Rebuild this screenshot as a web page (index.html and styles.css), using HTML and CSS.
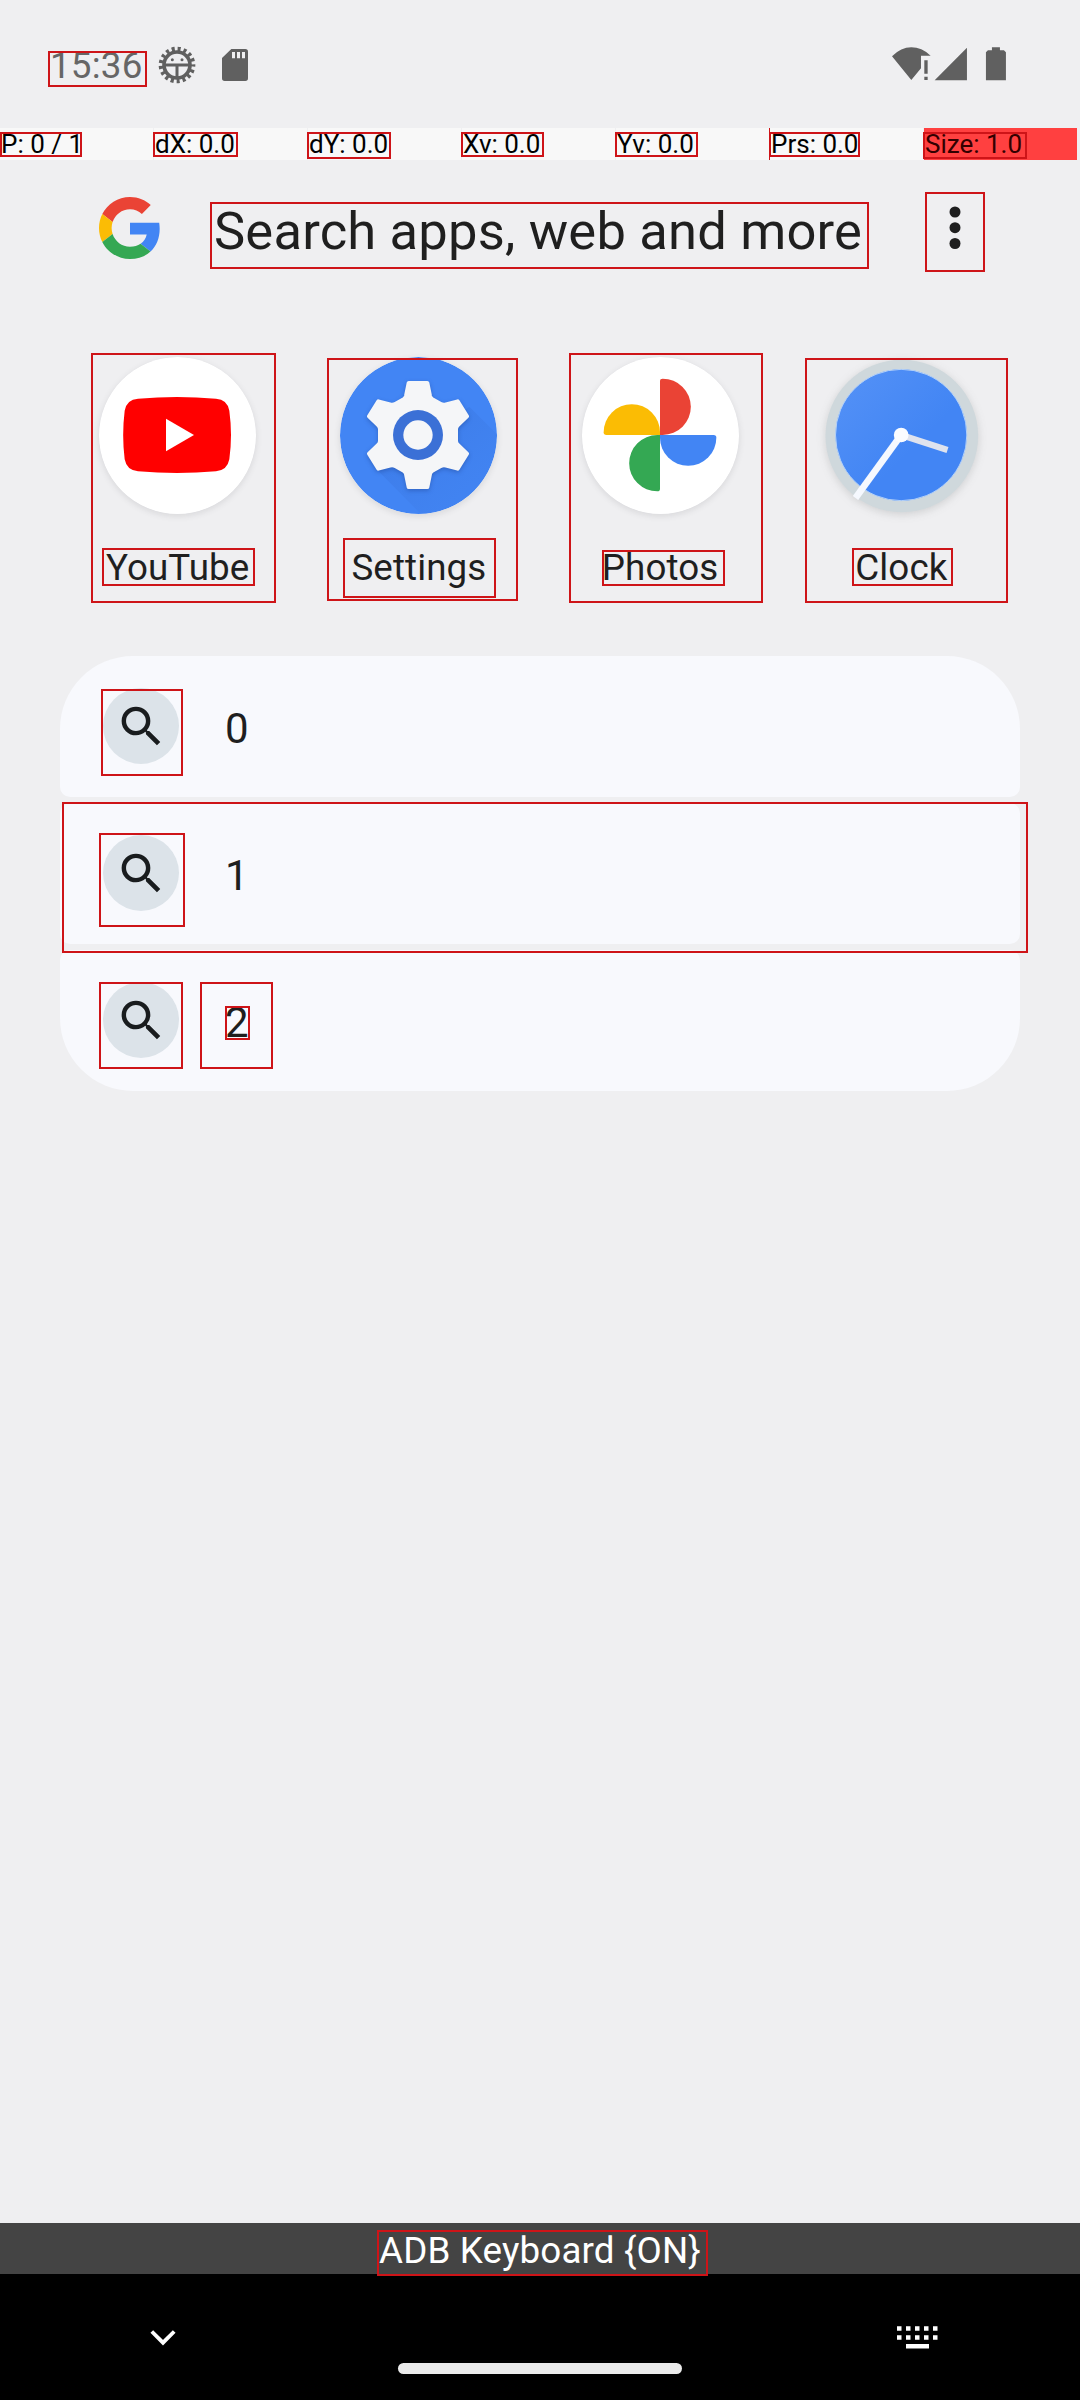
FILE: index.html
```html
<!DOCTYPE html>
<html lang="en">
<head>
<meta charset="utf-8">
<title>Search</title>
<link rel="stylesheet" href="styles.css">
</head>
<body>
<div class="screen">
  <header class="status">
    <span class="time">15:36</span>
    <svg class="bug" viewBox="474 78 114 114">
      <circle cx="531" cy="135" r="48" fill="none" stroke="#606060" stroke-width="14" stroke-dasharray="9 8.740" stroke-dashoffset="4"/>
      <circle cx="531" cy="135" r="39" fill="none" stroke="#606060" stroke-width="11"/>
      <path d="M494 135H568M531 135V176" stroke="#606060" stroke-width="9"/>
      <circle cx="517" cy="119" r="4.5" fill="#606060"/><circle cx="546" cy="119" r="4.5" fill="#606060"/>
    </svg>
    <svg class="sd" viewBox="666 87 78 96">
      <path fill="#606060" fill-rule="evenodd" d="M694 87h42q8 0 8 8v80q0 8-8 8h-62q-8 0-8-8v-61zM696 96v19h9V96zM711 96v19h9V96zM726 96v19h9V96z"/>
    </svg>
    <svg class="signals" viewBox="516 80 344 102">
      <path fill="#606060" d="M516 108Q543 81 574 81T632 106H603V144L574 179zM613 120h10v40h-10zM613 169h10v10h-10zM644 180L741 82V180zM816 81h24v9h12l6 6v84h-60V96l6-6h12z"/>
    </svg>
  </header>

  <div class="pointer">
    <span>P: 0 / 1</span><span>dX: 0.0</span><span>dY: 0.0</span><span>Xv: 0.0</span><span>Yv: 0.0</span><span>Prs: 0.0</span><span class="hot">Size: 1.0</span>
  </div>

  <div class="search">
    <svg class="google" viewBox="0 0 48 48">
      <path fill="#EA4335" d="M24 9.5c3.54 0 6.71 1.22 9.21 3.6l6.85-6.85C35.9 2.38 30.47 0 24 0 14.62 0 6.51 5.38 2.56 13.22l7.98 6.19C12.43 13.72 17.74 9.5 24 9.5z"/>
      <path fill="#4285F4" d="M46.98 24.55c0-1.57-.15-3.09-.38-4.55H24v9.02h12.94c-.58 2.96-2.26 5.48-4.78 7.18l7.73 6c4.51-4.18 7.09-10.36 7.09-17.65z"/>
      <path fill="#FBBC05" d="M10.53 28.59c-.48-1.45-.76-2.99-.76-4.59s.27-3.14.76-4.59l-7.98-6.19C.92 16.46 0 20.12 0 24c0 3.88.92 7.54 2.56 10.78l7.97-6.19z"/>
      <path fill="#34A853" d="M24 48c6.48 0 11.93-2.13 15.89-5.81l-7.73-6c-2.15 1.45-4.92 2.3-8.16 2.3-6.26 0-11.57-4.22-13.47-9.91l-7.98 6.19C6.51 42.62 14.62 48 24 48z"/>
    </svg>
    <span class="hint">Search apps, web and more</span>
    <svg class="more" viewBox="0 0 12 44"><g fill="#1f1f1f"><circle cx="6" cy="6" r="5.5"/><circle cx="6" cy="21.7" r="5.5"/><circle cx="6" cy="37.5" r="5.5"/></g></svg>
  </div>

  <div class="apps">
    <div class="app">
      <svg viewBox="87 51 471 471">
        <circle cx="322.5" cy="286.5" r="235.5" fill="#fff"/>
        <path fill="#f00" d="M204 176Q321 166 438 176Q472 178 478 212Q488 285 478 358Q472 391 438 394Q321 404 204 394Q170 391 164 358Q155 285 164 212Q170 178 204 176z"/>
        <path fill="#fff" d="M288 236L372 285L288 334z"/>
      </svg>
      <span>YouTube</span>
    </div>
    <div class="app">
      <svg viewBox="90 51 471 471">
        <defs>
          <clipPath id="disc"><circle cx="325.5" cy="286.5" r="235.5"/></clipPath>
          <linearGradient id="fall" x1="0" y1="0" x2="1" y2="1"><stop offset=".2" stop-color="#2a5bbd" stop-opacity=".2"/><stop offset=".75" stop-color="#3d78e0" stop-opacity=".08"/></linearGradient>
        </defs>
        <circle cx="325.5" cy="286.5" r="235.5" fill="#4285f4"/>
        <path clip-path="url(#disc)" fill="url(#fall)" d="M478 200L640 362L520 590H400L202 390z"/>
        <g class="gear">
          <path fill="#f5f6f8" stroke="#f5f6f8" stroke-width="12" stroke-linejoin="round" d="M296 129H352L360 168Q362 175 367 178L391 191Q400 196 408 193L443 184L471 229L443 256Q438 261 438 268V302Q438 309 443 314L471 341L443 386L408 377Q400 374 391 379L367 392Q362 395 360 402L352 441H296L288 402Q286 395 281 392L257 379Q248 374 240 377L205 386L177 341L205 314Q210 309 210 302V268Q210 261 205 256L177 229L205 184L240 193Q248 196 257 191L281 178Q286 175 288 168z"/>
        </g>
        <circle cx="324" cy="285" r="75" fill="#3b70d6"/>
        <circle cx="324" cy="285" r="44" fill="#f5f6f8"/>
      </svg>
      <span>Settings</span>
    </div>
    <div class="app">
      <svg viewBox="96 51 471 471">
        <circle cx="331.500" cy="286.5" r="235.5" fill="#fff"/>
        <path fill="#ea4335" d="M330 285V123Q330 116 338 116A84.500 84.500 0 0 1 338 285z"/>
        <path fill="#4285f4" d="M330 285H491Q499 285 499 293A84.500 84.500 0 0 1 330 293z"/>
        <path fill="#34a853" d="M330 285V446Q330 454 322 454A84.500 84.500 0 0 1 322 285z"/>
        <path fill="#fbbc04" d="M330 285H169Q161 285 161 277A84.500 84.500 0 0 1 330 277z"/>
      </svg>
      <span>Photos</span>
    </div>
    <div class="app clock">
      <svg viewBox="98.5 51 471 471">
        <defs><linearGradient id="face" x1="0" y1="0" x2="1" y2="1"><stop offset=".1" stop-color="#5290f6"/><stop offset=".6" stop-color="#4285f4"/></linearGradient></defs>
        <circle cx="335" cy="288" r="229" fill="#cfd8dc"/>
        <circle cx="333" cy="285" r="197" fill="url(#face)" stroke="#b3d0f8" stroke-width="3"/>
        <path d="M333 285L472 330" stroke="#dfe3ee" stroke-width="19"/>
        <path d="M333 285L196 474" stroke="#f5f8fe" stroke-width="20"/>
        <circle cx="333" cy="285" r="22" fill="#fafcff"/>
      </svg>
      <span>Clock</span>
    </div>
  </div>

  <div class="results">
    <div class="row"><span class="glass"><svg viewBox="0 0 24 24"><path d="M15.500 14h-.79l-.28-.27A6.471 6.471 0 0 0 16 9.500 6.500 6.500 0 1 0 9.500 16c1.610 0 3.090-.59 4.230-1.570l.27.28v.79l5 4.990L20.490 19l-4.990-5zm-6 0C7.010 14 5 11.990 5 9.500S7.010 5 9.500 5 14 7.010 14 9.500 11.990 14 9.500 14z"/></svg></span><span>0</span></div>
    <div class="row"><span class="glass"><svg viewBox="0 0 24 24"><path d="M15.500 14h-.79l-.28-.27A6.471 6.471 0 0 0 16 9.500 6.500 6.500 0 1 0 9.500 16c1.610 0 3.090-.59 4.230-1.570l.27.28v.79l5 4.990L20.490 19l-4.990-5zm-6 0C7.010 14 5 11.990 5 9.500S7.010 5 9.500 5 14 7.010 14 9.500 11.990 14 9.500 14z"/></svg></span><span>1</span></div>
    <div class="row"><span class="glass"><svg viewBox="0 0 24 24"><path d="M15.500 14h-.79l-.28-.27A6.471 6.471 0 0 0 16 9.500 6.500 6.500 0 1 0 9.500 16c1.610 0 3.090-.59 4.230-1.570l.27.28v.79l5 4.990L20.490 19l-4.990-5zm-6 0C7.010 14 5 11.990 5 9.500S7.010 5 9.500 5 14 7.010 14 9.500 11.990 14 9.500 14z"/></svg></span><span>2</span></div>
  </div>

  <div class="keyboard">ADB Keyboard {ON}</div>
  <nav class="nav">
    <svg class="down" viewBox="0 0 26 17"><path d="M1.800 2.500L13 13.700L24.200 2.500" fill="none" stroke="#fff" stroke-width="3.800"/></svg>
    <span class="pill"></span>
    <svg class="keys" viewBox="0 0 41 23"><path stroke="#fff" stroke-width="4.500" stroke-dasharray="4.500 4.500" d="M0 2.500H41M0 11.500H41"/><path fill="#fff" d="M9 18h23v4.500H9z"/></svg>
  </nav>

  <!-- element bounds -->
  <svg class="bounds" viewBox="0 0 1080 2400">
    <rect x="49" y="52" width="97" height="34"/>
    <rect x="1" y="133" width="80" height="23"/>
    <rect x="154" y="133" width="83" height="23"/>
    <rect x="308" y="133" width="82" height="25"/>
    <rect x="462" y="133" width="81" height="23"/>
    <rect x="616" y="133" width="81" height="23"/>
    <rect x="770" y="133" width="89" height="23"/>
    <path d="M769.500 128V160" stroke-width="1"/>
    <rect x="924" y="133" width="102" height="25"/>
    <rect x="211" y="203" width="657" height="65"/>
    <rect x="926" y="193" width="58" height="78"/>
    <rect x="92" y="354" width="183" height="248"/>
    <rect x="103" y="549" width="151" height="36"/>
    <rect x="328" y="359" width="189" height="241"/>
    <rect x="344" y="539" width="151" height="58"/>
    <rect x="570" y="354" width="192" height="248"/>
    <rect x="603" y="551" width="121" height="34"/>
    <rect x="806" y="359" width="201" height="243"/>
    <rect x="853" y="549" width="99" height="36"/>
    <rect x="102" y="690" width="80" height="85"/>
    <rect x="100" y="834" width="84" height="92"/>
    <rect x="63" y="803" width="964" height="149"/>
    <rect x="100" y="983" width="82" height="85"/>
    <rect x="201" y="983" width="71" height="85"/>
    <rect x="226" y="1007" width="23" height="32"/>
    <rect x="378" y="2231" width="329" height="44"/>
  </svg>
</div>
</body>
</html>
```
FILE: styles.css
```css
* { box-sizing: border-box; }
body { margin: 0; }
svg { display: block; flex: none; }
.screen {
  position: relative;
  display: flex;
  flex-direction: column;
  width: 1080px;
  height: 2400px;
  overflow: hidden;
  background: #efeff1;
  color: #1f1f1f;
  font-family: Roboto, sans-serif;
}
.status {
  display: flex;
  align-items: flex-start;
  height: 128px;
  padding: 46px 73px 0 50px;
}
.time {
  width: 108px;
  color: #666;
  font-size: 36.75px;
  letter-spacing: .2px;
  line-height: 40px;
}
.bug { width: 38px; height: 38px; }
.sd { width: 26px; height: 32px; margin: 3px 0 0 26px; }
.signals { width: 114.6px; height: 34px; margin: 1px 0 0 auto; }
.pointer {
  display: grid;
  grid-template-columns: repeat(7, 153px);
  gap: 1px;
  height: 32px;
  color: #000;
  font-size: 26px;
  line-height: 32px;
  white-space: nowrap;
}
.pointer span { padding-left: 1px; background: #f8f8f8; }
.pointer .hot { background: #ff4040; color: #300; }
.search {
  display: flex;
  align-items: center;
  height: 136px;
  padding: 0 119.5px 0 99px;
}
.google { width: 62px; height: 62px; }
.hint { margin: 6px auto 0 53px; font-size: 52.5px; letter-spacing: .19px; line-height: 62px; white-space: nowrap; }
.more { width: 12px; height: 44px; }
.apps {
  display: grid;
  grid-template-columns: repeat(4, 241.25px);
  padding: 61px 0 0 57px;
  height: 360px;
}
.app { display: flex; flex-direction: column; align-items: center; }
.app svg { width: 157px; height: 157px; border-radius: 50%; box-shadow: 0 2px 6px rgba(60, 64, 67, .13); }
.app.clock svg { box-shadow: none; filter: drop-shadow(0 2px 4px rgba(60, 64, 67, .18)); }
.gear { filter: drop-shadow(0 5px 6px rgba(20, 50, 120, .35)); }
.app span { margin-top: 32px; font-size: 36.75px; letter-spacing: .1px; line-height: 44px; }
.results { display: flex; flex-direction: column; gap: 6px; padding: 0 60px; }
.row {
  display: flex;
  align-items: center;
  gap: 46px;
  height: 141px;
  padding: 0 43px;
  border-radius: 10px;
  background: #f8f9fd;
  font-size: 42px;
}
.row:first-child { border-radius: 73px 73px 10px 10px; }
.row:last-child { border-radius: 10px 10px 73px 73px; }
.row > span:last-child { margin-top: 4px; }
.glass {
  display: grid;
  place-items: center;
  width: 76px;
  height: 76px;
  margin-top: -1px;
  border-radius: 50%;
  background: #dce3e9;
}
.glass svg { width: 53px; height: 53px; fill: #191c1e; }
.keyboard {
  height: 51px;
  margin-top: auto;
  background: #444;
  color: #fff;
  font-size: 36.75px;
  letter-spacing: .15px;
  line-height: 56px;
  text-align: center;
}
.nav {
  display: flex;
  align-items: flex-start;
  justify-content: space-between;
  height: 126px;
  padding: 52px 142px 0 150px;
  background: #000;
}
.down { width: 26px; height: 17px; margin-top: 3px; }
.pill { width: 284px; height: 11px; margin: 37px 0 0 7px; border-radius: 6px; background: #ebebeb; }
.keys { width: 41px; height: 23px; }
.bounds {
  position: absolute;
  inset: 0;
  width: 1080px;
  height: 2400px;
  fill: none;
  stroke: #ce1418;
  stroke-width: 2;
}
```
